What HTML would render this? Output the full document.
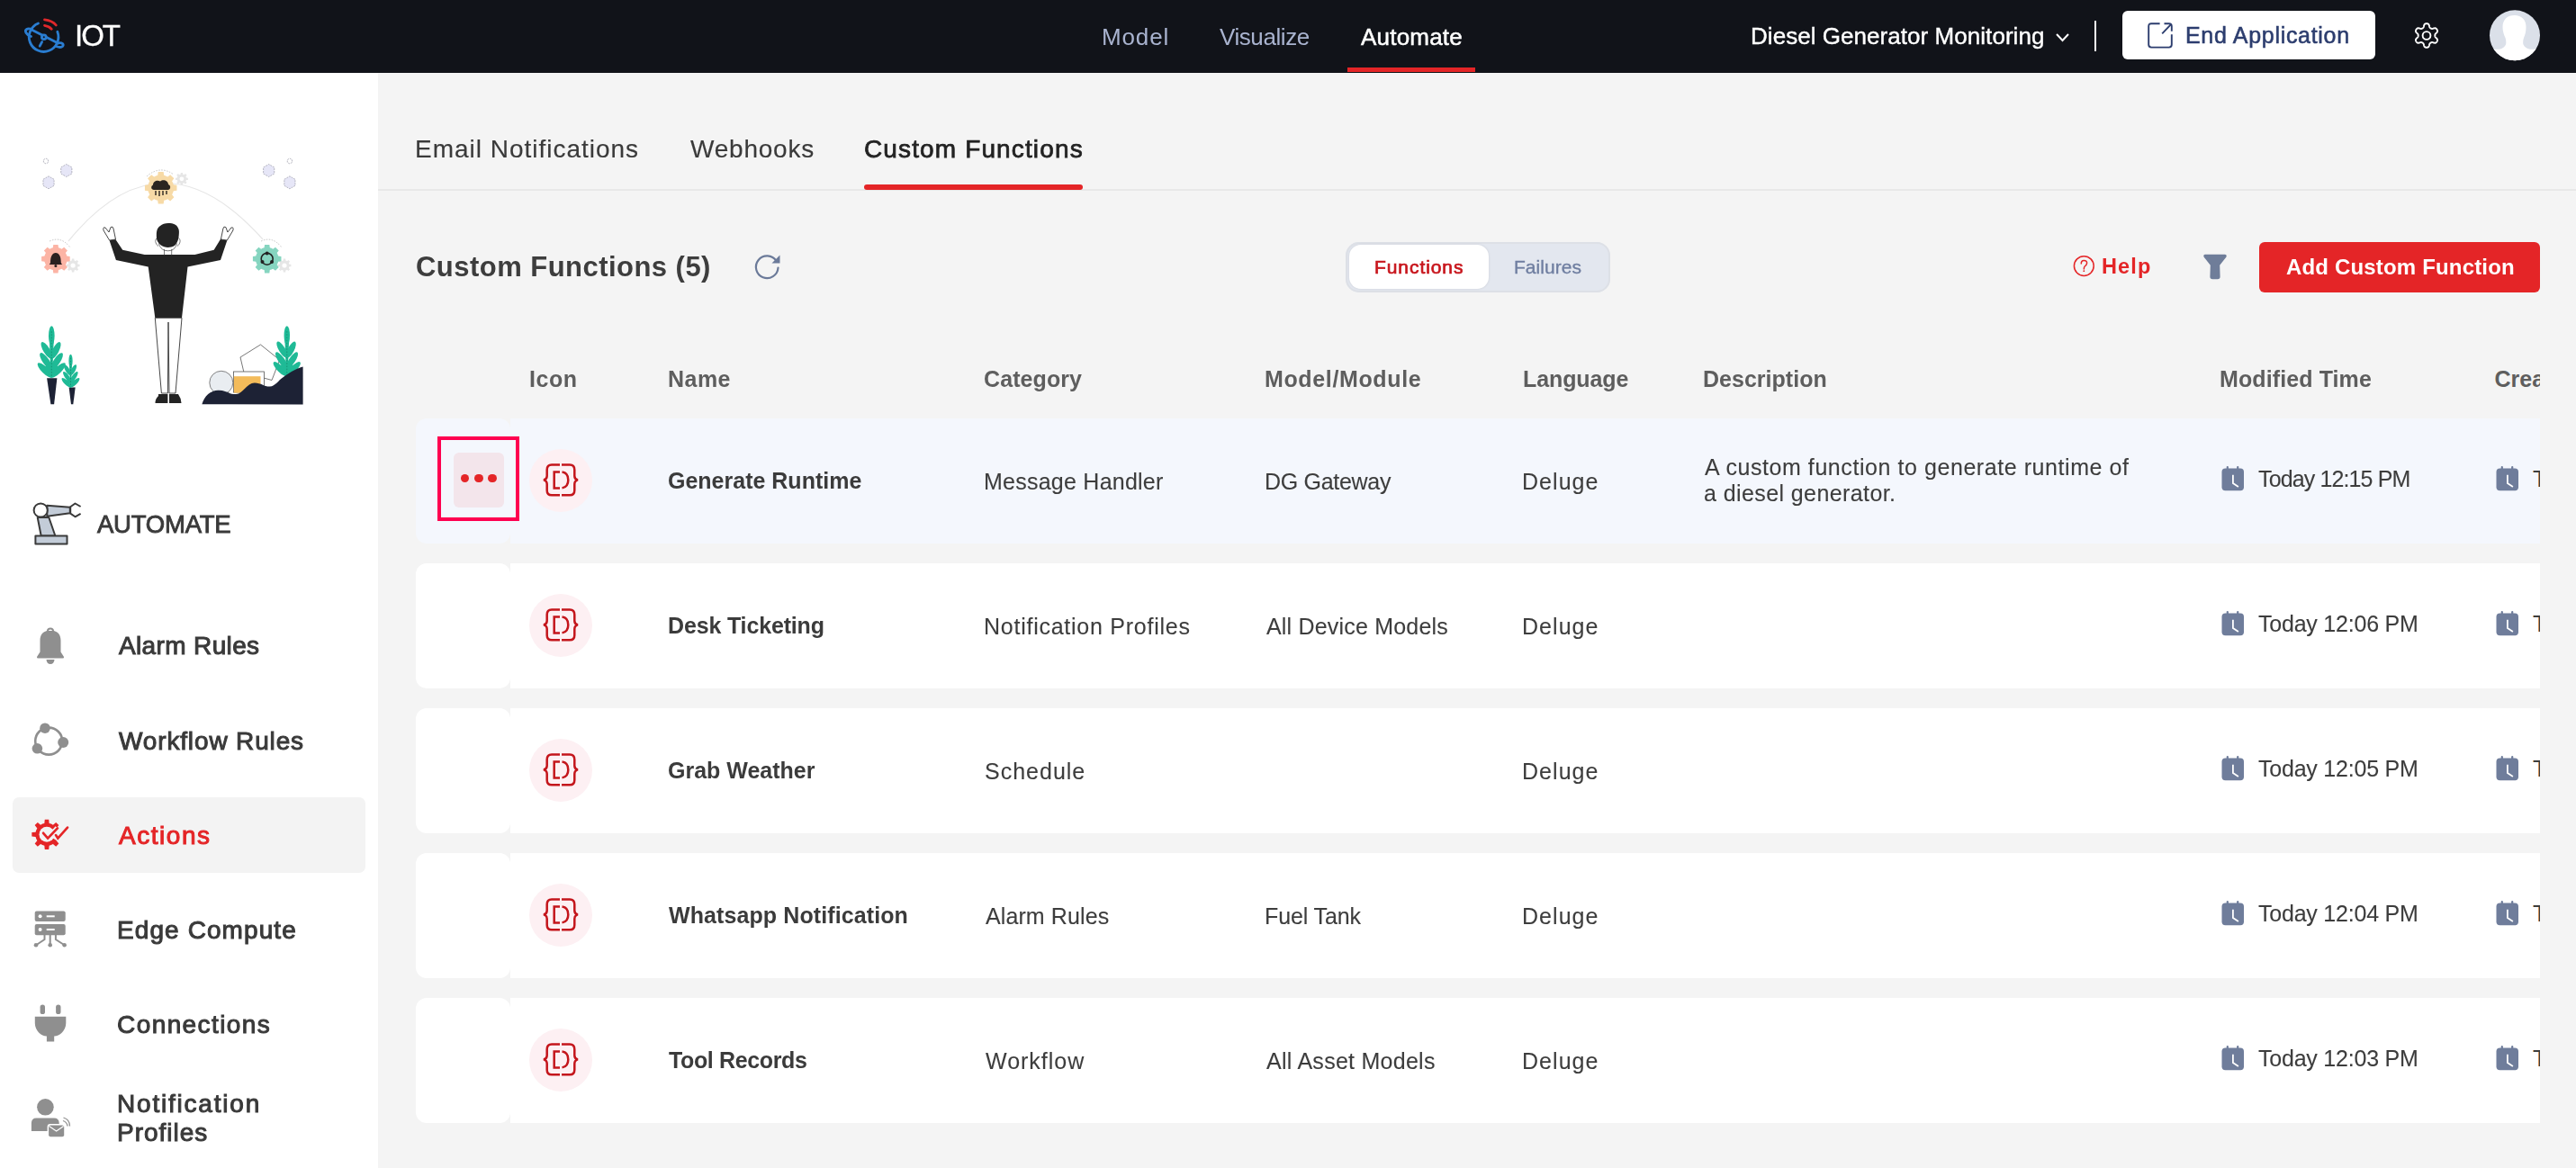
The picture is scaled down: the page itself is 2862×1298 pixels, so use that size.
<!DOCTYPE html>
<html><head><meta charset="utf-8"><style>
html,body{margin:0;padding:0;}
body{width:2862px;height:1298px;position:relative;overflow:hidden;background:#f4f4f4;font-family:"Liberation Sans", sans-serif;}
.t{position:absolute;white-space:nowrap;line-height:normal;will-change:transform;}
</style></head><body>
<div style='position:absolute;left:0px;top:0px;width:2862px;height:81px;background:#111319;'></div>
<svg style='position:absolute;left:20px;top:14px;' width='60' height='50' viewBox='20 14 60 50'>
<g fill="none" stroke="#2a7dd1" stroke-width="2.8" stroke-linecap="round">
<path d="M42.5 26 A16.3 16.3 0 1 0 63.8 35.3"/>
<path d="M35 33 Q49 40 64.5 48"/>
<path d="M35.5 32.8 C30.5 30.5 27 33 29 36.5 C30.5 39 32.5 40 34.5 40.5"/>
<path d="M64.5 47.8 C69.5 47 71.5 49.5 69.5 51.5 C68 53 65 52.5 62.5 51.5"/>
<circle cx="48.8" cy="41.2" r="2.4" fill="#111319"/>
<path d="M46.6 46.6 L44.2 51.2"/>
</g>
<g fill="none" stroke="#e0282b" stroke-width="2.8" stroke-linecap="round">
<path d="M49.5 21.8 C54.5 22.3 59.5 24.5 62.3 28"/>
<path d="M49.5 28.3 C52.5 28.8 55.5 30.2 57.3 32.3"/>
</g></svg>
<div style='position:absolute;left:1497px;top:74.5px;width:142px;height:5.8px;background:#e42527;'></div>
<svg style='position:absolute;left:2283px;top:36px;' width='17' height='12' viewBox='0 0 17 12'><path d="M2 2 L8.5 9 L15 2" fill="none" stroke="#ffffff" stroke-width="2"/></svg>
<div style='position:absolute;left:2327px;top:23px;width:2px;height:34px;background:#ffffff;'></div>
<div style='position:absolute;left:2357.5px;top:11.8px;width:281.5px;height:54.5px;background:#ffffff;border-radius:6px;'></div>
<svg style='position:absolute;left:2385px;top:24px;' width='30' height='31' viewBox='0 0 30 31'><g fill="none" stroke="#2c3d6e" stroke-width="1.9" stroke-linecap="butt" stroke-linejoin="round">
<path d="M14.6 2.2 H5.2 Q2.2 2.2 2.2 5.2 V25.6 Q2.2 28.6 5.2 28.6 H24.8 Q27.8 28.6 27.8 25.6 V14.3"/>
<path d="M19.5 2.2 H24.8 Q27.8 2.2 27.8 5.2 V10.7"/><path d="M17.2 13.3 L27.2 2.8"/></g></svg>
<svg style='position:absolute;left:2680px;top:24px;' width='32' height='32' viewBox='0 0 32 32'><g fill="none" stroke="#ffffff" stroke-width="1.9" stroke-linejoin="round">
<path d="M25.30 15.50 L25.30 15.74 L25.31 15.99 L25.34 16.23 L25.38 16.49 L25.46 16.75 L25.58 17.02 L25.79 17.31 L26.08 17.64 L26.47 18.01 L26.91 18.42 L27.34 18.86 L27.69 19.30 L27.92 19.72 L28.04 20.12 L28.07 20.50 L28.03 20.86 L27.94 21.20 L27.83 21.53 L27.68 21.84 L27.52 22.15 L27.33 22.45 L27.13 22.73 L26.91 23.00 L26.65 23.24 L26.36 23.45 L26.02 23.62 L25.62 23.71 L25.14 23.73 L24.58 23.64 L23.99 23.49 L23.41 23.31 L22.90 23.16 L22.46 23.07 L22.11 23.04 L21.81 23.07 L21.54 23.13 L21.31 23.22 L21.08 23.32 L20.86 23.44 L20.65 23.55 L20.44 23.68 L20.23 23.81 L20.03 23.95 L19.84 24.12 L19.65 24.31 L19.48 24.56 L19.32 24.88 L19.18 25.30 L19.06 25.82 L18.92 26.41 L18.76 27.01 L18.56 27.52 L18.30 27.94 L18.02 28.24 L17.70 28.45 L17.38 28.59 L17.04 28.69 L16.69 28.75 L16.35 28.79 L16.00 28.80 L15.65 28.79 L15.31 28.75 L14.96 28.69 L14.62 28.59 L14.30 28.45 L13.98 28.24 L13.70 27.94 L13.44 27.52 L13.24 27.01 L13.08 26.41 L12.94 25.82 L12.82 25.30 L12.68 24.88 L12.52 24.56 L12.35 24.31 L12.16 24.12 L11.97 23.95 L11.77 23.81 L11.56 23.68 L11.35 23.55 L11.14 23.44 L10.92 23.32 L10.69 23.22 L10.46 23.13 L10.19 23.07 L9.89 23.04 L9.54 23.07 L9.10 23.16 L8.59 23.31 L8.01 23.49 L7.42 23.64 L6.86 23.73 L6.38 23.71 L5.98 23.62 L5.64 23.45 L5.35 23.24 L5.09 23.00 L4.87 22.73 L4.67 22.45 L4.48 22.15 L4.32 21.84 L4.17 21.53 L4.06 21.20 L3.97 20.86 L3.93 20.50 L3.96 20.12 L4.08 19.72 L4.31 19.30 L4.66 18.86 L5.09 18.42 L5.53 18.01 L5.92 17.64 L6.21 17.31 L6.42 17.02 L6.54 16.75 L6.62 16.49 L6.66 16.23 L6.69 15.99 L6.70 15.74 L6.70 15.50 L6.70 15.26 L6.69 15.01 L6.66 14.77 L6.62 14.51 L6.54 14.25 L6.42 13.98 L6.21 13.69 L5.92 13.36 L5.53 12.99 L5.09 12.58 L4.66 12.14 L4.31 11.70 L4.08 11.28 L3.96 10.88 L3.93 10.50 L3.97 10.14 L4.06 9.80 L4.17 9.47 L4.32 9.16 L4.48 8.85 L4.67 8.55 L4.87 8.27 L5.09 8.00 L5.35 7.76 L5.64 7.55 L5.98 7.38 L6.38 7.29 L6.86 7.27 L7.42 7.36 L8.01 7.51 L8.59 7.69 L9.10 7.84 L9.54 7.93 L9.89 7.96 L10.19 7.93 L10.46 7.87 L10.69 7.78 L10.92 7.68 L11.14 7.56 L11.35 7.45 L11.56 7.32 L11.77 7.19 L11.97 7.05 L12.16 6.88 L12.35 6.69 L12.52 6.44 L12.68 6.12 L12.82 5.70 L12.94 5.18 L13.08 4.59 L13.24 3.99 L13.44 3.48 L13.70 3.06 L13.98 2.76 L14.30 2.55 L14.62 2.41 L14.96 2.31 L15.31 2.25 L15.65 2.21 L16.00 2.20 L16.35 2.21 L16.69 2.25 L17.04 2.31 L17.38 2.41 L17.70 2.55 L18.02 2.76 L18.30 3.06 L18.56 3.48 L18.76 3.99 L18.92 4.59 L19.06 5.18 L19.18 5.70 L19.32 6.12 L19.48 6.44 L19.65 6.69 L19.84 6.88 L20.03 7.05 L20.23 7.19 L20.44 7.32 L20.65 7.45 L20.86 7.56 L21.08 7.68 L21.31 7.78 L21.54 7.87 L21.81 7.93 L22.11 7.96 L22.46 7.93 L22.90 7.84 L23.41 7.69 L23.99 7.51 L24.58 7.36 L25.14 7.27 L25.62 7.29 L26.02 7.38 L26.36 7.55 L26.65 7.76 L26.91 8.00 L27.13 8.27 L27.33 8.55 L27.52 8.85 L27.68 9.16 L27.83 9.47 L27.94 9.80 L28.03 10.14 L28.07 10.50 L28.04 10.88 L27.92 11.28 L27.69 11.70 L27.34 12.14 L26.91 12.58 L26.47 12.99 L26.08 13.36 L25.79 13.69 L25.58 13.98 L25.46 14.25 L25.38 14.51 L25.34 14.77 L25.31 15.01 L25.30 15.26Z"/><circle cx="16" cy="15.5" r="4.4"/></g></svg>
<svg style='position:absolute;left:2765px;top:11px;' width='57' height='57' viewBox='0 0 57 57'><defs><clipPath id="av"><circle cx="29" cy="28.3" r="28"/></clipPath></defs>
<circle cx="29" cy="28.3" r="28" fill="#dbe0e9"/>
<g clip-path="url(#av)" fill="#ffffff">
<path d="M28.5 6 C36 6 41.5 10.5 41.5 19 C41.5 24 40.5 28 39 31 C38 34 38 37 38.5 38.5 C39.5 41 42 43 46 43.7 L58 43.7 V60 H0 V43.7 L12 43.7 C15.5 43 18 41 19 38.5 C19.5 37 19.5 34 18.5 31 C17 28 15.5 24 15.5 19 C15.5 10.5 21 6 28.5 6 Z"/>
</g></svg>
<div style='position:absolute;left:0px;top:81px;width:420px;height:1217px;background:#ffffff;'></div>
<div style='position:absolute;left:420px;top:81px;width:2442px;height:1217px;background:#f4f4f4;'></div>
<svg style='position:absolute;left:30px;top:160px;' width='320' height='300' viewBox='30 160 320 300'><path d="M76 268 Q180 140 292 266" fill="none" stroke="#e6e6e6" stroke-width="1.2"/><polygon points="53.60,180.50 51.00,182.00 48.40,180.50 48.40,177.50 51.00,176.00 53.60,177.50" fill="#ffffff" stroke="#9a9aa8" stroke-width="0.7" stroke-dasharray="2 1"/><polygon points="79.86,193.00 73.80,196.50 67.74,193.00 67.74,186.00 73.80,182.50 79.86,186.00" fill="#e6e6f7" stroke="#9a9aa8" stroke-width="0.7" stroke-dasharray="2 1"/><polygon points="60.06,206.30 54.00,209.80 47.94,206.30 47.94,199.30 54.00,195.80 60.06,199.30" fill="#e6e6f7" stroke="#9a9aa8" stroke-width="0.7" stroke-dasharray="2 1"/><polygon points="324.50,180.50 321.90,182.00 319.30,180.50 319.30,177.50 321.90,176.00 324.50,177.50" fill="#ffffff" stroke="#9a9aa8" stroke-width="0.7" stroke-dasharray="2 1"/><polygon points="304.76,193.00 298.70,196.50 292.64,193.00 292.64,186.00 298.70,182.50 304.76,186.00" fill="#e6e6f7" stroke="#9a9aa8" stroke-width="0.7" stroke-dasharray="2 1"/><polygon points="327.96,206.30 321.90,209.80 315.84,206.30 315.84,199.30 321.90,195.80 327.96,199.30" fill="#e6e6f7" stroke="#9a9aa8" stroke-width="0.7" stroke-dasharray="2 1"/><path d="M206.70 196.81 L206.95 197.55 L208.81 197.65 L208.81 199.95 L206.95 200.05 L206.70 200.79 L206.35 201.48 L207.60 202.87 L205.97 204.50 L204.58 203.25 L203.89 203.60 L203.15 203.85 L203.05 205.71 L200.75 205.71 L200.65 203.85 L199.91 203.60 L199.22 203.25 L197.83 204.50 L196.20 202.87 L197.45 201.48 L197.10 200.79 L196.85 200.05 L194.99 199.95 L194.99 197.65 L196.85 197.55 L197.10 196.81 L197.45 196.12 L196.20 194.73 L197.83 193.10 L199.22 194.35 L199.91 194.00 L200.65 193.75 L200.75 191.89 L203.05 191.89 L203.15 193.75 L203.89 194.00 L204.58 194.35 L205.97 193.10 L207.60 194.73 L206.35 196.12Z" fill="#e6e6e6"/><circle cx="201.9" cy="198.8" r="2.4" fill="#fff"/><path d="M86.27 292.86 L86.53 293.65 L88.50 293.77 L88.50 296.23 L86.53 296.35 L86.27 297.14 L85.90 297.89 L87.20 299.36 L85.46 301.10 L83.99 299.80 L83.24 300.17 L82.45 300.43 L82.33 302.40 L79.87 302.40 L79.75 300.43 L78.96 300.17 L78.21 299.80 L76.74 301.10 L75.00 299.36 L76.30 297.89 L75.93 297.14 L75.67 296.35 L73.70 296.23 L73.70 293.77 L75.67 293.65 L75.93 292.86 L76.30 292.11 L75.00 290.64 L76.74 288.90 L78.21 290.20 L78.96 289.83 L79.75 289.57 L79.87 287.60 L82.33 287.60 L82.45 289.57 L83.24 289.83 L83.99 290.20 L85.46 288.90 L87.20 290.64 L85.90 292.11Z" fill="#e6e6e6"/><circle cx="81.1" cy="295" r="2.6" fill="#fff"/><path d="M321.17 292.86 L321.43 293.65 L323.40 293.77 L323.40 296.23 L321.43 296.35 L321.17 297.14 L320.80 297.89 L322.10 299.36 L320.36 301.10 L318.89 299.80 L318.14 300.17 L317.35 300.43 L317.23 302.40 L314.77 302.40 L314.65 300.43 L313.86 300.17 L313.11 299.80 L311.64 301.10 L309.90 299.36 L311.20 297.89 L310.83 297.14 L310.57 296.35 L308.60 296.23 L308.60 293.77 L310.57 293.65 L310.83 292.86 L311.20 292.11 L309.90 290.64 L311.64 288.90 L313.11 290.20 L313.86 289.83 L314.65 289.57 L314.77 287.60 L317.23 287.60 L317.35 289.57 L318.14 289.83 L318.89 290.20 L320.36 288.90 L322.10 290.64 L320.80 292.11Z" fill="#e6e6e6"/><circle cx="316" cy="295" r="2.6" fill="#fff"/><path d="M192.10 203.25 L192.77 205.30 L196.46 205.84 L196.46 211.76 L192.77 212.30 L192.10 214.35 L191.12 216.28 L193.34 219.27 L189.17 223.44 L186.18 221.22 L184.25 222.20 L182.20 222.87 L181.66 226.56 L175.74 226.56 L175.20 222.87 L173.15 222.20 L171.22 221.22 L168.23 223.44 L164.06 219.27 L166.28 216.28 L165.30 214.35 L164.63 212.30 L160.94 211.76 L160.94 205.84 L164.63 205.30 L165.30 203.25 L166.28 201.32 L164.06 198.33 L168.23 194.16 L171.22 196.38 L173.15 195.40 L175.20 194.73 L175.74 191.04 L181.66 191.04 L182.20 194.73 L184.25 195.40 L186.18 196.38 L189.17 194.16 L193.34 198.33 L191.12 201.32Z" fill="#f7daa6"/><path d="M73.73 282.80 L74.32 284.61 L77.68 285.07 L77.68 290.33 L74.32 290.79 L73.73 292.60 L72.87 294.30 L74.92 297.00 L71.20 300.72 L68.50 298.67 L66.80 299.53 L64.99 300.12 L64.53 303.48 L59.27 303.48 L58.81 300.12 L57.00 299.53 L55.30 298.67 L52.60 300.72 L48.88 297.00 L50.93 294.30 L50.07 292.60 L49.48 290.79 L46.12 290.33 L46.12 285.07 L49.48 284.61 L50.07 282.80 L50.93 281.10 L48.88 278.40 L52.60 274.68 L55.30 276.73 L57.00 275.87 L58.81 275.28 L59.27 271.92 L64.53 271.92 L64.99 275.28 L66.80 275.87 L68.50 276.73 L71.20 274.68 L74.92 278.40 L72.87 281.10Z" fill="#fcb4a5"/><path d="M308.53 282.80 L309.12 284.61 L312.48 285.07 L312.48 290.33 L309.12 290.79 L308.53 292.60 L307.67 294.30 L309.72 297.00 L306.00 300.72 L303.30 298.67 L301.60 299.53 L299.79 300.12 L299.33 303.48 L294.07 303.48 L293.61 300.12 L291.80 299.53 L290.10 298.67 L287.40 300.72 L283.68 297.00 L285.73 294.30 L284.87 292.60 L284.28 290.79 L280.92 290.33 L280.92 285.07 L284.28 284.61 L284.87 282.80 L285.73 281.10 L283.68 278.40 L287.40 274.68 L290.10 276.73 L291.80 275.87 L293.61 275.28 L294.07 271.92 L299.33 271.92 L299.79 275.28 L301.60 275.87 L303.30 276.73 L306.00 274.68 L309.72 278.40 L307.67 281.10Z" fill="#86d5c0"/><path d="M171 211 C168 211 167 207 170 205.5 C170 201 175 199.5 178 201.5 C181 199 187 200.5 187 205 C190 205.5 190 211 186.5 211 Z" fill="#2b2520"/><path d="M173 212 V217 M177 212 V218 M181 212 V217 M185 212 V216" stroke="#2b2520" stroke-width="1.4"/><path d="M56 292 C56 285 58 281 61.9 281 C65.8 281 67.8 285 67.8 292 L69 294 H54.8 Z" fill="#2b2020"/><circle cx="61.9" cy="295.5" r="1.5" fill="#2b2020"/><circle cx="296.7" cy="287.7" r="6.5" fill="none" stroke="#222" stroke-width="1.6"/><circle cx="296.7" cy="281.5" r="2" fill="#222"/><circle cx="291.5" cy="291" r="2" fill="#222"/><circle cx="302" cy="291" r="2" fill="#222"/><path d="M163 196 Q178 183 193 194" fill="none" stroke="#aaa" stroke-width="0.7" stroke-dasharray="1.5 1.5"/><path d="M55 268 Q68 262 78 275" fill="none" stroke="#aaa" stroke-width="0.7" stroke-dasharray="1.5 1.5"/><path d="M290 268 Q303 262 313 275" fill="none" stroke="#aaa" stroke-width="0.7" stroke-dasharray="1.5 1.5"/><path d="M160.7 283.1 L136.2 277.8 L128.2 265.8 L121.6 267.2 L128.9 289.1 L164.7 296.4 L172.3 353.3 L202 353.3 L208.5 296.4 L245 289 L252.3 267.2 L245 265.8 L237.7 277.8 L216.5 283.1 Z" fill="#232323"/><path d="M121.6 267 L115 256 Q114 252 117 253 L121 258 L123 252.5 Q125.5 251 126 254 L128.5 266 Z" fill="#fff" stroke="#333" stroke-width="0.9"/><path d="M252.3 267 L258.9 256 Q259.9 252 256.9 253 L252.9 258 L250.9 252.5 Q248.4 251 247.9 254 L245.4 266 Z" fill="#fff" stroke="#333" stroke-width="0.9"/><path d="M182.5 277 V283.5 M190.7 277 V283.5" stroke="#444" stroke-width="0.7" fill="none"/><path d="M174.5 264.5 C171.8 266 172.2 271 176 273.5 M176.4 270.5 C177.5 275 180 277.3 183 278.3 Q186.6 279.2 190.2 278.3 C193 277.3 195.5 275 196.6 270.5 M198.4 264.5 C201 266 200.6 271 197 273.5" stroke="#444" stroke-width="0.7" fill="none"/><path d="M174 265 C173.5 258 174 253.5 178 251 C181 248 186 247.5 191 248.3 C196 249.3 199.2 253 198.9 258.5 C198.7 264 198 270 193.5 273.3 C189 275.8 182.5 275.5 178.8 272.5 C175.8 270 174.3 267.5 174 265 Z" fill="#232323"/><path d="M172.3 353.3 L179.4 437 L186.4 437 L187 358 L188 437 L195 437 L202 353.3 Z" fill="#fff" stroke="#333" stroke-width="0.9"/><path d="M176 438 L186.4 438 L186.4 448 L172.5 448 Q172.5 443 176 440 Z M188 438 L198 438 Q201.5 443 201.5 448 L188 448 Z" fill="#232323"/><path d="M52.1 420.2 L63.4 420.2 L60.1 449.3 L56.4 449.3 Z" fill="#1d2235"/><ellipse cx="57.30" cy="373.26" rx="3.32" ry="11.06" fill="#1fba96"/><polygon points="54.89,378.28 59.71,378.28 58.10,419.50 56.50,419.50" fill="#1fba96"/><ellipse cx="51.87" cy="389.34" rx="10.64" ry="3.62" transform="rotate(-121.5 51.87 389.34)" fill="#1fba96"/><ellipse cx="61.92" cy="389.34" rx="10.24" ry="3.62" transform="rotate(-62.9 61.92 389.34)" fill="#1fba96"/><ellipse cx="51.12" cy="401.41" rx="11.05" ry="3.62" transform="rotate(-125.2 51.12 401.41)" fill="#1fba96"/><ellipse cx="63.18" cy="401.41" rx="10.88" ry="3.62" transform="rotate(-56.2 63.18 401.41)" fill="#1fba96"/><ellipse cx="49.96" cy="411.46" rx="11.16" ry="3.62" transform="rotate(-135.0 49.96 411.46)" fill="#1fba96"/><ellipse cx="64.59" cy="411.46" rx="11.12" ry="3.62" transform="rotate(-45.2 64.59 411.46)" fill="#1fba96"/><path d="M48.25 408.44 Q57.30 420.00 66.35 408.44 L57.30 402.41 Z" fill="#1fba96"/><path d="M57.30 368.23 V419.50" stroke="#137a60" stroke-width="0.6" stroke-dasharray="1.6 1.6"/><path d="M76.6 430.5 L83.7 430.5 L81.3 449.3 L79 449.3 Z" fill="#1d2235"/><ellipse cx="78.50" cy="400.88" rx="2.12" ry="7.08" fill="#1fba96"/><polygon points="76.95,404.10 80.05,404.10 79.02,430.50 77.98,430.50" fill="#1fba96"/><ellipse cx="75.02" cy="411.18" rx="6.81" ry="2.32" transform="rotate(-121.5 75.02 411.18)" fill="#1fba96"/><ellipse cx="81.46" cy="411.18" rx="6.56" ry="2.32" transform="rotate(-62.9 81.46 411.18)" fill="#1fba96"/><ellipse cx="74.54" cy="418.91" rx="7.08" ry="2.32" transform="rotate(-125.2 74.54 418.91)" fill="#1fba96"/><ellipse cx="82.27" cy="418.91" rx="6.97" ry="2.32" transform="rotate(-56.2 82.27 418.91)" fill="#1fba96"/><ellipse cx="73.80" cy="425.35" rx="7.15" ry="2.32" transform="rotate(-135.0 73.80 425.35)" fill="#1fba96"/><ellipse cx="83.17" cy="425.35" rx="7.12" ry="2.32" transform="rotate(-45.2 83.17 425.35)" fill="#1fba96"/><path d="M72.71 423.42 Q78.50 430.82 84.29 423.42 L78.50 419.55 Z" fill="#1fba96"/><path d="M78.50 397.66 V430.50" stroke="#137a60" stroke-width="0.6" stroke-dasharray="1.6 1.6"/><path d="M289.5 383 L310.7 400 L302 422.5 L271 414 L267 397 Z" fill="none" stroke="#555" stroke-width="0.8"/><circle cx="245.8" cy="425.3" r="13" fill="#e9edf1" stroke="#666" stroke-width="0.8"/><rect x="259.5" y="413" width="34" height="23" fill="#fff" stroke="#555" stroke-width="0.8"/><rect x="259.9" y="418.2" width="29.6" height="18.4" fill="#f3bb5a"/><ellipse cx="318.80" cy="372.97" rx="3.23" ry="10.77" fill="#1fba96"/><polygon points="316.45,377.86 321.15,377.86 319.58,418.00 318.02,418.00" fill="#1fba96"/><ellipse cx="313.51" cy="388.63" rx="10.36" ry="3.52" transform="rotate(-121.5 313.51 388.63)" fill="#1fba96"/><ellipse cx="323.30" cy="388.63" rx="9.97" ry="3.52" transform="rotate(-62.9 323.30 388.63)" fill="#1fba96"/><ellipse cx="312.78" cy="400.38" rx="10.76" ry="3.52" transform="rotate(-125.2 312.78 400.38)" fill="#1fba96"/><ellipse cx="324.53" cy="400.38" rx="10.60" ry="3.52" transform="rotate(-56.2 324.53 400.38)" fill="#1fba96"/><ellipse cx="311.65" cy="410.17" rx="10.87" ry="3.52" transform="rotate(-135.0 311.65 410.17)" fill="#1fba96"/><ellipse cx="325.90" cy="410.17" rx="10.83" ry="3.52" transform="rotate(-45.2 325.90 410.17)" fill="#1fba96"/><path d="M309.99 407.23 Q318.80 418.49 327.61 407.23 L318.80 401.36 Z" fill="#1fba96"/><path d="M318.80 368.07 V418.00" stroke="#137a60" stroke-width="0.6" stroke-dasharray="1.6 1.6"/><path d="M224.4 449.3 C227 440 234 434 242.3 433.8 C251 433.5 255 438.5 262.1 438.1 C270 437.5 274 425.5 282.8 425.4 C290 425.3 294 430 299.8 429.6 C306 429 309 423 313.9 419.7 C320 415 328 410 336.6 407.5 L336.6 449.4 Z" fill="#1d2235"/></svg>
<svg style="position:absolute;left:0;top:540px" width="100" height="80" viewBox="0 540 100 80"><g stroke="#3a3a3a" stroke-width="2" stroke-linejoin="round">
<path d="M52.3 561.7 L77.8 563.7 L77.8 570.3 L52.3 573.8 Z" fill="#c3ccd8"/>
<path d="M89.6 563 L83.5 559.5 L78.2 563.3 L78.2 570.6 L83.5 574.3 L89.6 570.8" fill="#fff"/>
<path d="M41.7 575 L54.3 575 L61.4 595.5 L45.7 595.5 Z" fill="#c3ccd8"/>
<rect x="39.4" y="595.5" width="35.1" height="9.1" fill="#c3ccd8"/>
<circle cx="45.2" cy="567" r="7.6" fill="#fff"/>
</g></svg>
<svg style='position:absolute;left:38px;top:694px;' width='36' height='46' viewBox='0 0 36 46'><g fill="#8f8f8f">
<path d="M18 3.5 C15.5 3.5 14 5 14 7 C9 8.5 6.5 12 6.5 18 V30.5 L3 36 Q2.5 37.5 4.5 37.5 H31.5 Q33.5 37.5 33 36 L29.5 30.5 V18 C29.5 12 27 8.5 22 7 C22 5 20.5 3.5 18 3.5 Z M18 5.5 Q20 5.5 20 7 H16 Q16 5.5 18 5.5 Z"/>
<path d="M13.5 39 H22.5 Q22 44 18 44 Q14 44 13.5 39 Z"/></g></svg>
<svg style='position:absolute;left:30px;top:798px;' width='52' height='48' viewBox='0 0 52 48'><circle cx="24.2" cy="25.6" r="15" fill="none" stroke="#8f8f8f" stroke-width="2.6"/>
<circle cx="20" cy="11.2" r="5.8" fill="#8f8f8f"/><circle cx="40.2" cy="27" r="6" fill="#8f8f8f"/><circle cx="11.4" cy="33.8" r="5.8" fill="#8f8f8f"/></svg>
<div style='position:absolute;left:14px;top:885.5px;width:392px;height:84px;background:#f3f3f3;border-radius:7px;'></div>
<svg style='position:absolute;left:30px;top:905px;' width='50' height='45' viewBox='0 0 50 45'><defs><mask id="am"><rect x="0" y="0" width="50" height="45" fill="#fff"/>
<path d="M22 22.3 L40 11.05 L40 33.55 Z" fill="#000"/></mask></defs>
<g mask="url(#am)"><path d="M33.73 17.44 L34.42 19.63 L38.65 20.06 L38.65 24.54 L34.42 24.97 L33.73 27.16 L32.67 29.19 L35.36 32.49 L32.19 35.66 L28.89 32.97 L26.86 34.03 L24.67 34.72 L24.24 38.95 L19.76 38.95 L19.33 34.72 L17.14 34.03 L15.11 32.97 L11.81 35.66 L8.64 32.49 L11.33 29.19 L10.27 27.16 L9.58 24.97 L5.35 24.54 L5.35 20.06 L9.58 19.63 L10.27 17.44 L11.33 15.41 L8.64 12.11 L11.81 8.94 L15.11 11.63 L17.14 10.57 L19.33 9.88 L19.76 5.65 L24.24 5.65 L24.67 9.88 L26.86 10.57 L28.89 11.63 L32.19 8.94 L35.36 12.11 L32.67 15.41Z" fill="#e42527"/></g>
<circle cx="22" cy="22.3" r="8.5" fill="#f3f3f3"/>
<path d="M23.1 27 L33.9 15.4" stroke="#f3f3f3" stroke-width="6" fill="none"/>
<path d="M18.1 20.8 L23.1 26.6 L33.9 15.4" stroke="#e42527" stroke-width="2.7" fill="none" stroke-linecap="round"/>
<path d="M32 23.1 L34.3 26.6 L45 14.6" stroke="#e42527" stroke-width="2.7" fill="none" stroke-linecap="round"/></svg>
<svg style='position:absolute;left:34px;top:1008px;' width='44' height='48' viewBox='0 0 44 48'><g fill="#8f8f8f">
<rect x="4.7" y="4.5" width="34" height="11.6" rx="2"/>
<rect x="4.7" y="18.9" width="34" height="12.3" rx="2"/></g>
<g fill="#fff"><circle cx="10.6" cy="10.3" r="2"/><rect x="17.7" y="9.3" width="9" height="2"/>
<circle cx="10.6" cy="25" r="2"/><rect x="17.7" y="24" width="9" height="2"/></g>
<g stroke="#8f8f8f" stroke-width="2" fill="none"><path d="M21.7 31 V42"/><path d="M15.5 31 V36 L6.5 42"/><path d="M27.9 31 V36 L37.2 42"/></g>
<g fill="#8f8f8f"><circle cx="21.7" cy="42.2" r="2.3"/><circle cx="6" cy="42.2" r="2.3"/><circle cx="37.6" cy="42.2" r="2.3"/></g></svg>
<svg style='position:absolute;left:34px;top:1112px;' width='44' height='50' viewBox='0 0 44 50'><g fill="#8f8f8f">
<rect x="10.6" y="4.6" width="5.4" height="10.5" rx="2.7"/><rect x="28.1" y="4.6" width="5.4" height="10.5" rx="2.7"/>
<path d="M4.8 17.7 H39.3 V25 C39.3 33.5 32 39.5 26.2 39.5 V45.6 H17.9 V39.5 C12 39.5 4.8 33.5 4.8 25 Z"/></g></svg>
<svg style='position:absolute;left:30px;top:1215px;' width='52' height='54' viewBox='0 0 52 54'><g fill="#8f8f8f">
<circle cx="20.4" cy="15.3" r="9.3"/>
<path d="M4.9 42 V33 Q4.9 27.4 10.5 27.4 H30 Q35.7 27.4 35.7 33 V35.4 H24 V42 Z"/>
</g><rect x="22.6" y="33.9" width="20.1" height="15.8" rx="3" fill="#fff"/><rect x="24.1" y="35.4" width="17.1" height="12.8" rx="2" fill="#8f8f8f"/>
<path d="M24.6 36.5 L32.6 42 L40.6 36.5" stroke="#fff" stroke-width="1.1" fill="none"/>
<g stroke="#8f8f8f" stroke-width="1.3" fill="none"><path d="M40 30.5 Q44.5 32 45 36.5"/><path d="M40.5 27 Q47.5 29 47.5 36.5"/></g></svg>
<div style='position:absolute;left:420px;top:210px;width:2442px;height:2px;background:#e8e8e8;'></div>
<div style='position:absolute;left:960px;top:204.5px;width:243px;height:6.5px;background:#e42527;border-radius:4px;'></div>
<svg style='position:absolute;left:836px;top:280px;' width='33' height='33' viewBox='0 0 33 33'><g fill="none" stroke="#6b7a99" stroke-width="2.2" stroke-linecap="round">
<path d="M26.5 10 A12.3 12.3 0 1 0 28.5 17.5"/></g>
<path d="M30.5 3.5 L30.5 12.5 L21.5 12.5 Z" fill="#6b7a99"/></svg>
<div style='position:absolute;left:1495px;top:268.5px;width:294px;height:56px;background:#e3e7ef;border-radius:15px;box-shadow:inset 0 0 0 2px #dde0e6;'></div>
<div style='position:absolute;left:1499px;top:271.5px;width:155px;height:49px;background:#ffffff;border-radius:13px;box-shadow:0 0 3px rgba(0,0,0,0.10);'></div>
<svg style='position:absolute;left:2302px;top:282px;' width='27' height='27' viewBox='0 0 27 27'><circle cx="13.3" cy="13.6" r="10.9" fill="none" stroke="#e42527" stroke-width="1.5"/>
<path d="M10.3 11.5 Q10 7.5 13.3 7.5 Q16.8 7.5 16.6 10.5 Q16.4 12.5 14.2 14 Q13.2 15 13.3 17.5" fill="none" stroke="#e42527" stroke-width="1.5"/>
<circle cx="13.3" cy="19.2" r="0.9" fill="#e42527"/></svg>
<svg style='position:absolute;left:2446px;top:281px;' width='30' height='31' viewBox='0 0 30 31'><path d="M4 1.7 H25.8 Q28.3 1.7 27.5 4.5 L20.2 13.8 L20.6 26.5 Q20.6 29.3 17.8 29.3 H12.2 Q9.4 29.3 9.4 26.5 L9.8 13.8 L2.5 4.5 Q1.7 1.7 4 1.7 Z" fill="#6f7d99"/></svg>
<div style='position:absolute;left:2510px;top:268.6px;width:312px;height:56px;background:#e42527;border-radius:6px;'></div>
<div style='position:absolute;left:2771.5px;top:407.4px;width:50.5px;overflow:hidden;white-space:nowrap;font-size:25px;font-weight:700;color:#5e5e5e;line-height:normal'>Created Time</div>
<div style='position:absolute;left:567px;top:465px;width:2255px;height:139px;background:#f4f7fd;'></div>
<div style='position:absolute;left:462px;top:465px;width:105px;height:139px;background:#f4f7fd;border-radius:12px;'></div>
<div style='position:absolute;left:588px;top:499px;width:70px;height:70px;background:#fdf0f3;border-radius:50%;'></div>
<svg style="position:absolute;left:603px;top:515px" width="40" height="37" viewBox="0 0 40 37"><g fill="none" stroke="#c4161c" stroke-width="2.5">
<path d="M19 1.5 H10 Q4.7 1.5 4.7 7 V14 Q4.7 17.5 1 18.4 Q4.7 19.3 4.7 23 V30 Q4.7 35.3 10 35.3 H19"/>
<path d="M21 1.5 H30 Q35.3 1.5 35.3 7 V14 Q35.3 17.5 39 18.4 Q35.3 19.3 35.3 23 V30 Q35.3 35.3 30 35.3 H21"/>
<path d="M19 9.6 H12.7 V27.4 H19"/>
<path d="M21.5 9.6 Q28.3 10.5 28.3 18.4 Q28.3 26 21.5 27.4"/></g></svg>
<svg style="position:absolute;left:2467.5px;top:518px" width="26" height="28" viewBox="0 0 26 28">
<rect x="0.5" y="2.5" width="24.5" height="24.8" rx="4" fill="#6f7d9b"/>
<rect x="5.7" y="0" width="2.2" height="5" rx="1" fill="#6f7d9b"/><rect x="17.1" y="0" width="2.2" height="5" rx="1" fill="#6f7d9b"/>
<path d="M12.9 9.8 V19 L18.9 23.1" fill="none" stroke="#ffffff" stroke-width="1.8"/></svg>
<svg style="position:absolute;left:2772.5px;top:518px" width="26" height="28" viewBox="0 0 26 28">
<rect x="0.5" y="2.5" width="24.5" height="24.8" rx="4" fill="#6f7d9b"/>
<rect x="5.7" y="0" width="2.2" height="5" rx="1" fill="#6f7d9b"/><rect x="17.1" y="0" width="2.2" height="5" rx="1" fill="#6f7d9b"/>
<path d="M12.9 9.8 V19 L18.9 23.1" fill="none" stroke="#ffffff" stroke-width="1.8"/></svg>
<div style='position:absolute;left:2814px;top:518.1px;width:8px;overflow:hidden;font-size:25px;color:#3d3d3d;line-height:normal'>T</div>
<div style='position:absolute;left:567px;top:626px;width:2255px;height:139px;background:#ffffff;'></div>
<div style='position:absolute;left:462px;top:626px;width:105px;height:139px;background:#ffffff;border-radius:12px;'></div>
<div style='position:absolute;left:588px;top:660px;width:70px;height:70px;background:#fdf0f3;border-radius:50%;'></div>
<svg style="position:absolute;left:603px;top:676px" width="40" height="37" viewBox="0 0 40 37"><g fill="none" stroke="#c4161c" stroke-width="2.5">
<path d="M19 1.5 H10 Q4.7 1.5 4.7 7 V14 Q4.7 17.5 1 18.4 Q4.7 19.3 4.7 23 V30 Q4.7 35.3 10 35.3 H19"/>
<path d="M21 1.5 H30 Q35.3 1.5 35.3 7 V14 Q35.3 17.5 39 18.4 Q35.3 19.3 35.3 23 V30 Q35.3 35.3 30 35.3 H21"/>
<path d="M19 9.6 H12.7 V27.4 H19"/>
<path d="M21.5 9.6 Q28.3 10.5 28.3 18.4 Q28.3 26 21.5 27.4"/></g></svg>
<svg style="position:absolute;left:2467.5px;top:679px" width="26" height="28" viewBox="0 0 26 28">
<rect x="0.5" y="2.5" width="24.5" height="24.8" rx="4" fill="#6f7d9b"/>
<rect x="5.7" y="0" width="2.2" height="5" rx="1" fill="#6f7d9b"/><rect x="17.1" y="0" width="2.2" height="5" rx="1" fill="#6f7d9b"/>
<path d="M12.9 9.8 V19 L18.9 23.1" fill="none" stroke="#ffffff" stroke-width="1.8"/></svg>
<svg style="position:absolute;left:2772.5px;top:679px" width="26" height="28" viewBox="0 0 26 28">
<rect x="0.5" y="2.5" width="24.5" height="24.8" rx="4" fill="#6f7d9b"/>
<rect x="5.7" y="0" width="2.2" height="5" rx="1" fill="#6f7d9b"/><rect x="17.1" y="0" width="2.2" height="5" rx="1" fill="#6f7d9b"/>
<path d="M12.9 9.8 V19 L18.9 23.1" fill="none" stroke="#ffffff" stroke-width="1.8"/></svg>
<div style='position:absolute;left:2814px;top:679.1px;width:8px;overflow:hidden;font-size:25px;color:#3d3d3d;line-height:normal'>T</div>
<div style='position:absolute;left:567px;top:787px;width:2255px;height:139px;background:#ffffff;'></div>
<div style='position:absolute;left:462px;top:787px;width:105px;height:139px;background:#ffffff;border-radius:12px;'></div>
<div style='position:absolute;left:588px;top:821px;width:70px;height:70px;background:#fdf0f3;border-radius:50%;'></div>
<svg style="position:absolute;left:603px;top:837px" width="40" height="37" viewBox="0 0 40 37"><g fill="none" stroke="#c4161c" stroke-width="2.5">
<path d="M19 1.5 H10 Q4.7 1.5 4.7 7 V14 Q4.7 17.5 1 18.4 Q4.7 19.3 4.7 23 V30 Q4.7 35.3 10 35.3 H19"/>
<path d="M21 1.5 H30 Q35.3 1.5 35.3 7 V14 Q35.3 17.5 39 18.4 Q35.3 19.3 35.3 23 V30 Q35.3 35.3 30 35.3 H21"/>
<path d="M19 9.6 H12.7 V27.4 H19"/>
<path d="M21.5 9.6 Q28.3 10.5 28.3 18.4 Q28.3 26 21.5 27.4"/></g></svg>
<svg style="position:absolute;left:2467.5px;top:840px" width="26" height="28" viewBox="0 0 26 28">
<rect x="0.5" y="2.5" width="24.5" height="24.8" rx="4" fill="#6f7d9b"/>
<rect x="5.7" y="0" width="2.2" height="5" rx="1" fill="#6f7d9b"/><rect x="17.1" y="0" width="2.2" height="5" rx="1" fill="#6f7d9b"/>
<path d="M12.9 9.8 V19 L18.9 23.1" fill="none" stroke="#ffffff" stroke-width="1.8"/></svg>
<svg style="position:absolute;left:2772.5px;top:840px" width="26" height="28" viewBox="0 0 26 28">
<rect x="0.5" y="2.5" width="24.5" height="24.8" rx="4" fill="#6f7d9b"/>
<rect x="5.7" y="0" width="2.2" height="5" rx="1" fill="#6f7d9b"/><rect x="17.1" y="0" width="2.2" height="5" rx="1" fill="#6f7d9b"/>
<path d="M12.9 9.8 V19 L18.9 23.1" fill="none" stroke="#ffffff" stroke-width="1.8"/></svg>
<div style='position:absolute;left:2814px;top:840.1px;width:8px;overflow:hidden;font-size:25px;color:#3d3d3d;line-height:normal'>T</div>
<div style='position:absolute;left:567px;top:948px;width:2255px;height:139px;background:#ffffff;'></div>
<div style='position:absolute;left:462px;top:948px;width:105px;height:139px;background:#ffffff;border-radius:12px;'></div>
<div style='position:absolute;left:588px;top:982px;width:70px;height:70px;background:#fdf0f3;border-radius:50%;'></div>
<svg style="position:absolute;left:603px;top:998px" width="40" height="37" viewBox="0 0 40 37"><g fill="none" stroke="#c4161c" stroke-width="2.5">
<path d="M19 1.5 H10 Q4.7 1.5 4.7 7 V14 Q4.7 17.5 1 18.4 Q4.7 19.3 4.7 23 V30 Q4.7 35.3 10 35.3 H19"/>
<path d="M21 1.5 H30 Q35.3 1.5 35.3 7 V14 Q35.3 17.5 39 18.4 Q35.3 19.3 35.3 23 V30 Q35.3 35.3 30 35.3 H21"/>
<path d="M19 9.6 H12.7 V27.4 H19"/>
<path d="M21.5 9.6 Q28.3 10.5 28.3 18.4 Q28.3 26 21.5 27.4"/></g></svg>
<svg style="position:absolute;left:2467.5px;top:1001px" width="26" height="28" viewBox="0 0 26 28">
<rect x="0.5" y="2.5" width="24.5" height="24.8" rx="4" fill="#6f7d9b"/>
<rect x="5.7" y="0" width="2.2" height="5" rx="1" fill="#6f7d9b"/><rect x="17.1" y="0" width="2.2" height="5" rx="1" fill="#6f7d9b"/>
<path d="M12.9 9.8 V19 L18.9 23.1" fill="none" stroke="#ffffff" stroke-width="1.8"/></svg>
<svg style="position:absolute;left:2772.5px;top:1001px" width="26" height="28" viewBox="0 0 26 28">
<rect x="0.5" y="2.5" width="24.5" height="24.8" rx="4" fill="#6f7d9b"/>
<rect x="5.7" y="0" width="2.2" height="5" rx="1" fill="#6f7d9b"/><rect x="17.1" y="0" width="2.2" height="5" rx="1" fill="#6f7d9b"/>
<path d="M12.9 9.8 V19 L18.9 23.1" fill="none" stroke="#ffffff" stroke-width="1.8"/></svg>
<div style='position:absolute;left:2814px;top:1001.1px;width:8px;overflow:hidden;font-size:25px;color:#3d3d3d;line-height:normal'>T</div>
<div style='position:absolute;left:567px;top:1109px;width:2255px;height:139px;background:#ffffff;'></div>
<div style='position:absolute;left:462px;top:1109px;width:105px;height:139px;background:#ffffff;border-radius:12px;'></div>
<div style='position:absolute;left:588px;top:1143px;width:70px;height:70px;background:#fdf0f3;border-radius:50%;'></div>
<svg style="position:absolute;left:603px;top:1159px" width="40" height="37" viewBox="0 0 40 37"><g fill="none" stroke="#c4161c" stroke-width="2.5">
<path d="M19 1.5 H10 Q4.7 1.5 4.7 7 V14 Q4.7 17.5 1 18.4 Q4.7 19.3 4.7 23 V30 Q4.7 35.3 10 35.3 H19"/>
<path d="M21 1.5 H30 Q35.3 1.5 35.3 7 V14 Q35.3 17.5 39 18.4 Q35.3 19.3 35.3 23 V30 Q35.3 35.3 30 35.3 H21"/>
<path d="M19 9.6 H12.7 V27.4 H19"/>
<path d="M21.5 9.6 Q28.3 10.5 28.3 18.4 Q28.3 26 21.5 27.4"/></g></svg>
<svg style="position:absolute;left:2467.5px;top:1162px" width="26" height="28" viewBox="0 0 26 28">
<rect x="0.5" y="2.5" width="24.5" height="24.8" rx="4" fill="#6f7d9b"/>
<rect x="5.7" y="0" width="2.2" height="5" rx="1" fill="#6f7d9b"/><rect x="17.1" y="0" width="2.2" height="5" rx="1" fill="#6f7d9b"/>
<path d="M12.9 9.8 V19 L18.9 23.1" fill="none" stroke="#ffffff" stroke-width="1.8"/></svg>
<svg style="position:absolute;left:2772.5px;top:1162px" width="26" height="28" viewBox="0 0 26 28">
<rect x="0.5" y="2.5" width="24.5" height="24.8" rx="4" fill="#6f7d9b"/>
<rect x="5.7" y="0" width="2.2" height="5" rx="1" fill="#6f7d9b"/><rect x="17.1" y="0" width="2.2" height="5" rx="1" fill="#6f7d9b"/>
<path d="M12.9 9.8 V19 L18.9 23.1" fill="none" stroke="#ffffff" stroke-width="1.8"/></svg>
<div style='position:absolute;left:2814px;top:1162.1px;width:8px;overflow:hidden;font-size:25px;color:#3d3d3d;line-height:normal'>T</div>
<div style='position:absolute;left:504px;top:503px;width:56px;height:61px;background:#f3e5eb;border-radius:6px;'></div>
<div style='position:absolute;left:511.90000000000003px;top:526.7px;width:9.6px;height:9.6px;background:#e42527;border-radius:50%;'></div>
<div style='position:absolute;left:527.2px;top:526.7px;width:9.6px;height:9.6px;background:#e42527;border-radius:50%;'></div>
<div style='position:absolute;left:542.4000000000001px;top:526.7px;width:9.6px;height:9.6px;background:#e42527;border-radius:50%;'></div>
<div style='position:absolute;left:486px;top:485px;width:90.5px;height:93.5px;box-sizing:border-box;border:4.5px solid #fe0050;'></div>
<div class=t id=t0 style='left:83.0px;top:21.1px;font-size:33px;font-weight:400;color:#ffffff;letter-spacing:-2.000px;-webkit-text-stroke:0.3px #ffffff;'>IOT</div>
<div class=t id=t1 style='left:1224.0px;top:25.8px;font-size:26px;font-weight:400;color:#a9b3cf;letter-spacing:0.850px;'>Model</div>
<div class=t id=t2 style='left:1355.0px;top:25.8px;font-size:26px;font-weight:400;color:#a9b3cf;letter-spacing:-0.425px;'>Visualize</div>
<div class=t id=t3 style='left:1512.0px;top:25.8px;font-size:26px;font-weight:400;color:#ffffff;letter-spacing:0.205px;-webkit-text-stroke:0.5px #ffffff;'>Automate</div>
<div class=t id=t4 style='left:1945.0px;top:25.3px;font-size:26px;font-weight:400;color:#ffffff;letter-spacing:0.048px;-webkit-text-stroke:0.4px #ffffff;'>Diesel Generator Monitoring</div>
<div class=t id=t5 style='left:2428.0px;top:25.4px;font-size:25px;font-weight:400;color:#2c3d6e;letter-spacing:0.697px;-webkit-text-stroke:0.55px #2c3d6e;'>End Application</div>
<div class=t id=t6 style='left:107.5px;top:566.6px;font-size:27.5px;font-weight:400;color:#3a3a3a;letter-spacing:-0.232px;-webkit-text-stroke:0.9px #3a3a3a;'>AUTOMATE</div>
<div class=t id=t7 style='left:131.5px;top:702.4px;font-size:28px;font-weight:400;color:#3a3a3a;letter-spacing:0.360px;-webkit-text-stroke:1.0px #3a3a3a;'>Alarm Rules</div>
<div class=t id=t8 style='left:131.5px;top:807.5px;font-size:28px;font-weight:400;color:#3a3a3a;letter-spacing:0.855px;-webkit-text-stroke:1.0px #3a3a3a;'>Workflow Rules</div>
<div class=t id=t9 style='left:131.5px;top:912.7px;font-size:28px;font-weight:400;color:#e42527;letter-spacing:1.532px;-webkit-text-stroke:1.0px #e42527;'>Actions</div>
<div class=t id=t10 style='left:129.5px;top:1017.7px;font-size:28px;font-weight:400;color:#3a3a3a;letter-spacing:1.091px;-webkit-text-stroke:1.0px #3a3a3a;'>Edge Compute</div>
<div class=t id=t11 style='left:129.5px;top:1122.7px;font-size:28px;font-weight:400;color:#3a3a3a;letter-spacing:1.420px;-webkit-text-stroke:1.0px #3a3a3a;'>Connections</div>
<div class=t id=t12 style='left:129.5px;top:1210.7px;font-size:28px;font-weight:400;color:#3a3a3a;letter-spacing:1.795px;-webkit-text-stroke:1.0px #3a3a3a;'>Notification</div>
<div class=t id=t13 style='left:129.5px;top:1242.7px;font-size:28px;font-weight:400;color:#3a3a3a;letter-spacing:1.000px;-webkit-text-stroke:1.0px #3a3a3a;'>Profiles</div>
<div class=t id=t14 style='left:460.5px;top:150.4px;font-size:28px;font-weight:400;color:#3a3a3a;letter-spacing:0.988px;-webkit-text-stroke:0.15px #3a3a3a;'>Email Notifications</div>
<div class=t id=t15 style='left:766.5px;top:150.4px;font-size:28px;font-weight:400;color:#3a3a3a;letter-spacing:0.776px;-webkit-text-stroke:0.15px #3a3a3a;'>Webhooks</div>
<div class=t id=t16 style='left:960.0px;top:150.4px;font-size:28px;font-weight:400;color:#222222;letter-spacing:1.133px;-webkit-text-stroke:0.75px #222222;'>Custom Functions</div>
<div class=t id=t17 style='left:461.5px;top:279.4px;font-size:31px;font-weight:700;color:#3d3d3d;letter-spacing:0.464px;'>Custom Functions (5)</div>
<div class=t id=t18 style='left:1526.5px;top:284.7px;font-size:21px;font-weight:400;color:#c8161d;letter-spacing:0.925px;-webkit-text-stroke:0.7px #c8161d;'>Functions</div>
<div class=t id=t19 style='left:1682.0px;top:284.7px;font-size:21px;font-weight:400;color:#6f7ea0;letter-spacing:0.027px;-webkit-text-stroke:0.35px #6f7ea0;'>Failures</div>
<div class=t id=t20 style='left:2335.0px;top:283.0px;font-size:23.5px;font-weight:700;color:#e42527;letter-spacing:1.138px;'>Help</div>
<div class=t id=t21 style='left:2540.0px;top:282.6px;font-size:24px;font-weight:700;color:#ffffff;letter-spacing:0.167px;'>Add Custom Function</div>
<div class=t id=t22 style='left:587.5px;top:407.4px;font-size:25px;font-weight:700;color:#5e5e5e;letter-spacing:0.530px;'>Icon</div>
<div class=t id=t23 style='left:742.0px;top:407.4px;font-size:25px;font-weight:700;color:#5e5e5e;letter-spacing:0.470px;'>Name</div>
<div class=t id=t24 style='left:1092.5px;top:407.4px;font-size:25px;font-weight:700;color:#5e5e5e;letter-spacing:0.089px;'>Category</div>
<div class=t id=t25 style='left:1404.5px;top:407.4px;font-size:25px;font-weight:700;color:#5e5e5e;letter-spacing:0.635px;'>Model/Module</div>
<div class=t id=t26 style='left:1692.0px;top:407.4px;font-size:25px;font-weight:700;color:#5e5e5e;letter-spacing:-0.089px;'>Language</div>
<div class=t id=t27 style='left:1891.5px;top:407.4px;font-size:25px;font-weight:700;color:#5e5e5e;letter-spacing:0.020px;'>Description</div>
<div class=t id=t28 style='left:2466.0px;top:407.4px;font-size:25px;font-weight:700;color:#5e5e5e;letter-spacing:0.103px;'>Modified Time</div>
<div class=t id=t29 style='left:742.0px;top:520.4px;font-size:25px;font-weight:700;color:#3b3b3b;letter-spacing:-0.002px;'>Generate Runtime</div>
<div class=t id=t30 style='left:1092.5px;top:520.9px;font-size:25px;font-weight:400;color:#3d3d3d;letter-spacing:0.243px;-webkit-text-stroke:0.1px #3d3d3d;'>Message Handler</div>
<div class=t id=t31 style='left:1404.5px;top:520.9px;font-size:25px;font-weight:400;color:#3d3d3d;letter-spacing:-0.295px;-webkit-text-stroke:0.1px #3d3d3d;'>DG Gateway</div>
<div class=t id=t32 style='left:1691.0px;top:520.9px;font-size:25px;font-weight:400;color:#3d3d3d;letter-spacing:1.040px;-webkit-text-stroke:0.1px #3d3d3d;'>Deluge</div>
<div class=t id=t33 style='left:1893.5px;top:505.4px;font-size:25px;font-weight:400;color:#3d3d3d;letter-spacing:0.567px;-webkit-text-stroke:0.1px #3d3d3d;'>A custom function to generate runtime of</div>
<div class=t id=t34 style='left:1892.5px;top:534.1px;font-size:25px;font-weight:400;color:#3d3d3d;letter-spacing:0.405px;-webkit-text-stroke:0.1px #3d3d3d;'>a diesel generator.</div>
<div class=t id=t35 style='left:2509.2px;top:518.1px;font-size:25px;font-weight:400;color:#3d3d3d;letter-spacing:-0.872px;-webkit-text-stroke:0.1px #3d3d3d;'>Today 12:15 PM</div>
<div class=t id=t36 style='left:742.0px;top:681.4px;font-size:25px;font-weight:700;color:#3b3b3b;letter-spacing:-0.154px;'>Desk Ticketing</div>
<div class=t id=t37 style='left:1092.5px;top:681.9px;font-size:25px;font-weight:400;color:#3d3d3d;letter-spacing:0.750px;-webkit-text-stroke:0.1px #3d3d3d;'>Notification Profiles</div>
<div class=t id=t38 style='left:1406.5px;top:681.9px;font-size:25px;font-weight:400;color:#3d3d3d;letter-spacing:0.194px;-webkit-text-stroke:0.1px #3d3d3d;'>All Device Models</div>
<div class=t id=t39 style='left:1691.0px;top:681.9px;font-size:25px;font-weight:400;color:#3d3d3d;letter-spacing:1.040px;-webkit-text-stroke:0.1px #3d3d3d;'>Deluge</div>
<div class=t id=t40 style='left:2509.2px;top:679.1px;font-size:25px;font-weight:400;color:#3d3d3d;letter-spacing:-0.218px;-webkit-text-stroke:0.1px #3d3d3d;'>Today 12:06 PM</div>
<div class=t id=t41 style='left:742.0px;top:842.4px;font-size:25px;font-weight:700;color:#3b3b3b;'>Grab Weather</div>
<div class=t id=t42 style='left:1093.5px;top:842.9px;font-size:25px;font-weight:400;color:#3d3d3d;letter-spacing:1.000px;-webkit-text-stroke:0.1px #3d3d3d;'>Schedule</div>
<div class=t id=t43 style='left:1691.0px;top:842.9px;font-size:25px;font-weight:400;color:#3d3d3d;letter-spacing:1.040px;-webkit-text-stroke:0.1px #3d3d3d;'>Deluge</div>
<div class=t id=t44 style='left:2509.2px;top:840.1px;font-size:25px;font-weight:400;color:#3d3d3d;letter-spacing:-0.218px;-webkit-text-stroke:0.1px #3d3d3d;'>Today 12:05 PM</div>
<div class=t id=t45 style='left:743.0px;top:1003.4px;font-size:25px;font-weight:700;color:#3b3b3b;letter-spacing:0.100px;'>Whatsapp Notification</div>
<div class=t id=t46 style='left:1094.5px;top:1003.9px;font-size:25px;font-weight:400;color:#3d3d3d;letter-spacing:0.100px;-webkit-text-stroke:0.1px #3d3d3d;'>Alarm Rules</div>
<div class=t id=t47 style='left:1404.5px;top:1003.9px;font-size:25px;font-weight:400;color:#3d3d3d;letter-spacing:-0.125px;-webkit-text-stroke:0.1px #3d3d3d;'>Fuel Tank</div>
<div class=t id=t48 style='left:1691.0px;top:1003.9px;font-size:25px;font-weight:400;color:#3d3d3d;letter-spacing:1.040px;-webkit-text-stroke:0.1px #3d3d3d;'>Deluge</div>
<div class=t id=t49 style='left:2509.2px;top:1001.1px;font-size:25px;font-weight:400;color:#3d3d3d;letter-spacing:-0.218px;-webkit-text-stroke:0.1px #3d3d3d;'>Today 12:04 PM</div>
<div class=t id=t50 style='left:743.0px;top:1164.4px;font-size:25px;font-weight:700;color:#3b3b3b;letter-spacing:-0.364px;'>Tool Records</div>
<div class=t id=t51 style='left:1094.5px;top:1164.9px;font-size:25px;font-weight:400;color:#3d3d3d;letter-spacing:1.000px;-webkit-text-stroke:0.1px #3d3d3d;'>Workflow</div>
<div class=t id=t52 style='left:1406.5px;top:1164.9px;font-size:25px;font-weight:400;color:#3d3d3d;letter-spacing:0.267px;-webkit-text-stroke:0.1px #3d3d3d;'>All Asset Models</div>
<div class=t id=t53 style='left:1691.0px;top:1164.9px;font-size:25px;font-weight:400;color:#3d3d3d;letter-spacing:1.040px;-webkit-text-stroke:0.1px #3d3d3d;'>Deluge</div>
<div class=t id=t54 style='left:2509.2px;top:1162.1px;font-size:25px;font-weight:400;color:#3d3d3d;letter-spacing:-0.218px;-webkit-text-stroke:0.1px #3d3d3d;'>Today 12:03 PM</div>
</body></html>
